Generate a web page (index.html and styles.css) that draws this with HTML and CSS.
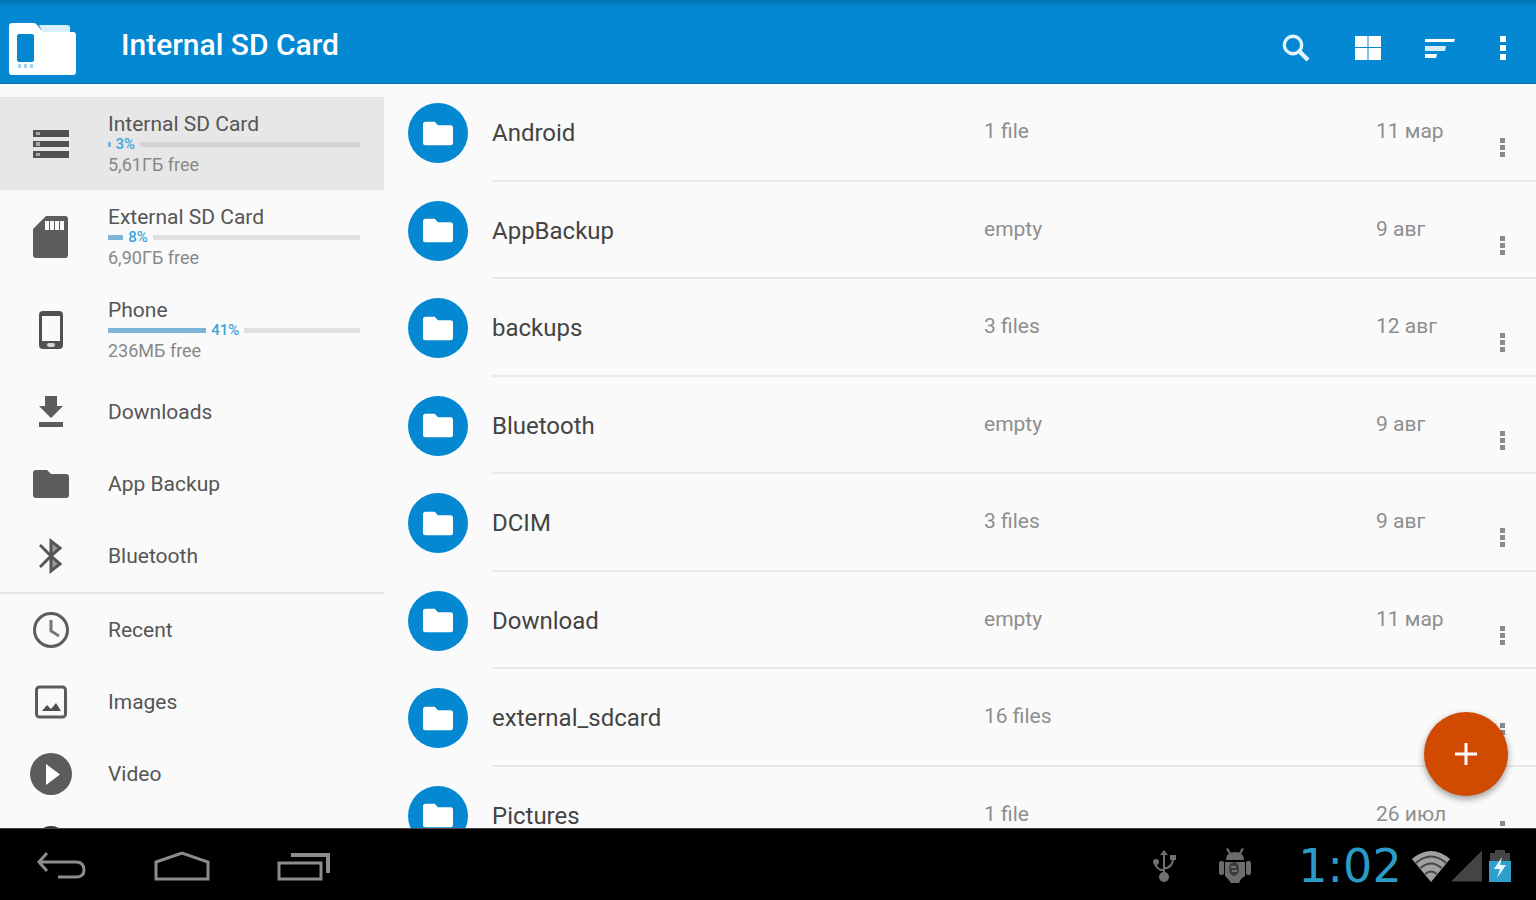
FILE: index.html
```html
<!DOCTYPE html>
<html lang="en">
<head>
<meta charset="utf-8">
<title>Internal SD Card</title>
<link rel="stylesheet" href="styles.css">
</head>
<body>
<svg class="defs" aria-hidden="true">
  <symbol id="folder" viewBox="0 0 36 30"><path d="M3 1h11l4 4h15a3 3 0 0 1 3 3v18a3 3 0 0 1-3 3H3a3 3 0 0 1-3-3V4a3 3 0 0 1 3-3z"/></symbol>
  <symbol id="dots" viewBox="0 0 6 20"><path d="M0 0h5v5H0zM0 7h5v5H0zM0 14h5v5H0z"/></symbol>
</svg>

<header class="appbar">
  <svg class="logo" viewBox="0 0 68 54" aria-hidden="true">
    <path fill="#d8effa" d="M30 3h28q3 0 3 3v5H34z"/>
    <path fill="#fff" d="M3 1h22q2 0 4 3l5 6h30q3 0 3 3v37q0 3-3 3H3q-3 0-3-3V4q0-3 3-3z"/>
    <rect x="8" y="12" width="17" height="28" rx="2" fill="#0488d2"/>
    <path fill="#a8d3ec" d="M9 42h3v4H9zM15 42h3v4h-3zM21 42h3v4h-3z"/>
  </svg>
  <h1 class="title">Internal SD Card</h1>
  <div class="actions">
    <button class="action" aria-label="Search"><svg width="30" height="30" viewBox="0 0 30 30" fill="none" stroke="#e4f4fd"><circle cx="12" cy="12" r="8.7" stroke-width="3.4"/><path d="M18.500 18.500l8.500 8.500" stroke-width="4.200"/></svg></button>
    <button class="action" aria-label="Grid view"><svg width="28" height="26" viewBox="0 0 28 26" fill="#fff"><path d="M1 1h12.500v11H1zM14.500 1h12.500v11h-12.500zM1 13h12.500v12H1zM14.500 13h12.500v12h-12.500z"/></svg></button>
    <button class="action" aria-label="Sort"><svg width="30" height="22" viewBox="0 0 30 22"><path fill="#fff" d="M0 2h30l-1 3H0zM0 17h12l-1 4H0z"/><path fill="#d5ecf9" d="M0 9h21l-1 5H0z"/></svg></button>
    <button class="action overflow" aria-label="More options"><svg width="8" height="26" viewBox="0 0 8 26" fill="#fff"><path d="M1 1h6v6H1zM1 10h6v6H1zM1 19h6v6H1z"/></svg></button>
  </div>
</header>

<div class="content">
  <nav class="sidebar" aria-label="Storage">
    <button class="place storage selected">
      <span class="place-icon"><svg width="36" height="28" viewBox="0 0 36 28"><path fill="#505050" d="M0 0h36v7H0zM0 11h36v6H0zM0 21h36v7H0z"/><path fill="#aaa" d="M3 2h4v3H3zM3 12h4v4H3zM3 23h4v3H3z"/></svg></span>
      <span class="details"><span class="label">Internal SD Card</span><span class="meter"><span class="fill" style="--value:3"></span><span class="percent">3%</span><span class="track"></span></span><span class="free">5,61ГБ free</span></span>
    </button>
    <button class="place storage">
      <span class="place-icon"><svg width="36" height="42" viewBox="0 0 36 42"><path fill="#5c5c5c" d="M13 0h19q3 0 3 3v36q0 3-3 3H3q-3 0-3-3V13z"/><path fill="#fafafa" d="M12 5h4v9h-4zM17 5h4v9h-4zM22 5h4v9h-4zM27 5h4v9h-4z"/></svg></span>
      <span class="details"><span class="label">External SD Card</span><span class="meter"><span class="fill" style="--value:8"></span><span class="percent">8%</span><span class="track"></span></span><span class="free">6,90ГБ free</span></span>
    </button>
    <button class="place storage">
      <span class="place-icon"><svg width="26" height="40" viewBox="0 0 26 40"><rect x="1" y="1" width="24" height="38" rx="4" fill="#505050"/><path fill="#fafafa" d="M4 6h18v25H4z"/><rect x="9" y="33" width="8" height="4" rx="2" fill="#d5d5d5"/></svg></span>
      <span class="details"><span class="label">Phone</span><span class="meter"><span class="fill" style="--value:41"></span><span class="percent">41%</span><span class="track"></span></span><span class="free">236МБ free</span></span>
    </button>
    <button class="place">
      <span class="place-icon"><svg width="24" height="32" viewBox="0 0 24 32" fill="#5c5c5c"><path d="M6 0h12v10h6L12 22 0 10h6zM0 26h24v5H0z"/></svg></span>
      <span class="label">Downloads</span>
    </button>
    <button class="place">
      <span class="place-icon"><svg width="36" height="30" fill="#5c5c5c"><use href="#folder"/></svg></span>
      <span class="label">App Backup</span>
    </button>
    <button class="place">
      <span class="place-icon"><svg width="24" height="36" viewBox="0 0 24 36" fill="none" stroke="#555" stroke-width="3"><path fill="#999" d="M12 18V3l9 7zM12 18v15l9-7z"/><path d="M1 7l11 11L1 29"/></svg></span>
      <span class="label">Bluetooth</span>
    </button>
    <div class="group">
      <button class="place">
        <span class="place-icon"><svg width="36" height="36" viewBox="0 0 36 36" fill="none" stroke="#5c5c5c" stroke-width="3"><circle cx="18" cy="18" r="16.500"/><path stroke="#777" d="M18 8v11l8 5"/></svg></span>
        <span class="label">Recent</span>
      </button>
      <button class="place">
        <span class="place-icon"><svg width="32" height="34" viewBox="0 0 32 34"><rect x="1.500" y="2" width="29" height="30" rx="3" fill="none" stroke="#5c5c5c" stroke-width="3"/><path fill="#505050" d="M7 26l5-6 4 4 5-6 5 8z"/></svg></span>
        <span class="label">Images</span>
      </button>
      <button class="place">
        <span class="place-icon"><svg width="42" height="42" viewBox="0 0 42 42"><circle cx="21" cy="21" r="21" fill="#5c5c5c"/><path fill="#fff" d="M16 11v21l14-10.500z"/></svg></span>
        <span class="label">Video</span>
      </button>
      <button class="place" aria-hidden="true" tabindex="-1">
        <span class="place-icon"><svg width="32" height="40" viewBox="0 0 32 40"><circle cx="16" cy="16" r="16" fill="#333"/></svg></span>
      </button>
    </div>
  </nav>

  <main class="files">
    <ul class="list">
      <li class="file"><span class="badge"><svg width="30" height="25"><use href="#folder"/></svg></span><div class="row"><span class="name">Android</span><span class="meta">1 file</span><span class="meta">11 мар</span><button class="more" aria-label="Android options"><svg width="6" height="20"><use href="#dots"/></svg></button></div></li>
      <li class="file"><span class="badge"><svg width="30" height="25"><use href="#folder"/></svg></span><div class="row"><span class="name">AppBackup</span><span class="meta">empty</span><span class="meta">9 авг</span><button class="more" aria-label="AppBackup options"><svg width="6" height="20"><use href="#dots"/></svg></button></div></li>
      <li class="file"><span class="badge"><svg width="30" height="25"><use href="#folder"/></svg></span><div class="row"><span class="name">backups</span><span class="meta">3 files</span><span class="meta">12 авг</span><button class="more" aria-label="backups options"><svg width="6" height="20"><use href="#dots"/></svg></button></div></li>
      <li class="file"><span class="badge"><svg width="30" height="25"><use href="#folder"/></svg></span><div class="row"><span class="name">Bluetooth</span><span class="meta">empty</span><span class="meta">9 авг</span><button class="more" aria-label="Bluetooth options"><svg width="6" height="20"><use href="#dots"/></svg></button></div></li>
      <li class="file"><span class="badge"><svg width="30" height="25"><use href="#folder"/></svg></span><div class="row"><span class="name">DCIM</span><span class="meta">3 files</span><span class="meta">9 авг</span><button class="more" aria-label="DCIM options"><svg width="6" height="20"><use href="#dots"/></svg></button></div></li>
      <li class="file"><span class="badge"><svg width="30" height="25"><use href="#folder"/></svg></span><div class="row"><span class="name">Download</span><span class="meta">empty</span><span class="meta">11 мар</span><button class="more" aria-label="Download options"><svg width="6" height="20"><use href="#dots"/></svg></button></div></li>
      <li class="file"><span class="badge"><svg width="30" height="25"><use href="#folder"/></svg></span><div class="row"><span class="name">external_sdcard</span><span class="meta">16 files</span><span class="meta"></span><button class="more" aria-label="external_sdcard options"><svg width="6" height="20"><use href="#dots"/></svg></button></div></li>
      <li class="file"><span class="badge"><svg width="30" height="25"><use href="#folder"/></svg></span><div class="row"><span class="name">Pictures</span><span class="meta">1 file</span><span class="meta">26 июл</span><button class="more" aria-label="Pictures options"><svg width="6" height="20"><use href="#dots"/></svg></button></div></li>
    </ul>
  </main>
  <button class="fab" aria-label="Add"><svg width="22" height="22" viewBox="0 0 22 22" fill="#fff"><path d="M9.500 0h3v9.500H22v3h-9.500V22h-3v-9.500H0v-3h9.500z"/></svg></button>
</div>

<footer class="system">
  <div class="keys">
    <button class="key" aria-label="Back"><svg width="50" height="30" viewBox="0 0 50 30" fill="none" stroke="#8c8c8c" stroke-width="3"><path d="M11 2L3 11l8 9M3 11h37q8 0 8 8 0 7-8 7H22"/></svg></button>
    <button class="key" aria-label="Home"><svg width="56" height="30" viewBox="0 0 56 30" fill="none" stroke="#8c8c8c" stroke-width="3"><path d="M2 11L28 2l26 9v17H2z"/></svg></button>
    <button class="key" aria-label="Recent apps"><svg width="54" height="30" viewBox="0 0 54 30" fill="none" stroke="#8c8c8c"><path stroke-width="3" d="M3 12h42v16H3z"/><path stroke-width="4" d="M15 4h37v18"/></svg></button>
  </div>
  <div class="status">
    <svg class="usb" width="24" height="32" viewBox="0 0 24 32" fill="none" stroke="#707070" stroke-width="2"><path d="M12 4v24M12 20H9Q3 18 3 11M12 18h3q5-2 6-8"/><g fill="#707070" stroke="none"><path d="M12 0l4 5H8z"/><circle cx="12" cy="27" r="5"/><circle cx="4" cy="12" r="3"/><path d="M18 5h6v5h-6z"/></g></svg>
    <svg class="debug" width="32" height="36" viewBox="0 0 32 36"><g fill="#6c6c6c"><path d="M7 11q1-7 9-7t9 7v1H7zM6 14h20v14l-4 3-2 4h-8l-3-4-3-3z"/><rect x="0" y="13" width="5" height="14" rx="2"/><rect x="27" y="13" width="5" height="14" rx="2"/><path d="M9 0l3 5-2 1-3-5zM23 0l-3 5 2 1 3-5z"/></g><ellipse cx="15" cy="21" rx="5" ry="7" fill="#3a3a3a"/><path d="M12 19h5M13 23h5" fill="none" stroke="#707070" stroke-width="2"/></svg>
    <time class="clock">1:02</time>
    <svg class="wifi" width="40" height="32" viewBox="0 0 42 32" preserveAspectRatio="none"><path fill="#a0a0a0" d="M1 9Q21-7 41 9L21 32z"/><g fill="none" stroke="#444" stroke-width="2"><path d="M5 13q16-13 32 0M10 18q11-9 22 0M15 24q6-5 12 0"/></g></svg>
    <svg class="signal" width="31" height="32" viewBox="0 0 32 32"><path fill="#444" d="M32 0v32H0z"/></svg>
    <svg class="battery" width="24" height="34" viewBox="0 0 24 34"><path fill="#444" d="M7 1h10v3h5v8H2V4h5z"/><path fill="#2fa0cb" d="M1 12h22v21H1z"/><path fill="#e8f8ff" d="M14 8L6 20h6l-3 9 9-13h-6z"/></svg>
  </div>
</footer>
</body>
</html>
```
FILE: styles.css
```css
* { box-sizing: border-box; }

body {
  margin: 0;
  height: 100vh;
  display: flex;
  flex-direction: column;
  overflow: hidden;
  background: #fafafa;
  color: #555;
  font-family: Roboto, "Noto Sans", sans-serif;
}

button {
  margin: 0;
  padding: 0;
  border: 0;
  background: none;
  color: inherit;
  font: inherit;
  text-align: left;
  cursor: pointer;
}

svg { display: block; }
.defs { display: none; }

.appbar {
  flex: none;
  height: 84px;
  display: flex;
  align-items: center;
  padding: 6px 0 0 9px;
  background: linear-gradient(#0072aa, #0488d2 6px);
  border-bottom: 1px solid #0674b4;
}

.logo { width: 68px; height: 54px; margin-top: 8px; }

.title {
  flex: 1;
  margin: 0 0 0 44px;
  color: #fff;
  font-size: 30px;
  font-weight: 500;
  line-height: 36px;
}

.actions { display: flex; margin-top: 6px; }

.action {
  width: 72px;
  height: 72px;
  display: grid;
  place-items: center;
}

.action.overflow {
  width: 60px;
  padding-right: 6px;
}

.content {
  position: relative;
  flex: 1;
  min-height: 0;
  display: flex;
}

.sidebar {
  width: 25%;
  padding-top: 13px;
  overflow: hidden;
}

.place {
  width: 100%;
  height: 72px;
  display: flex;
  align-items: center;
  padding-right: 24px;
  font-size: 21px;
}

.place.storage { height: 93px; }
.place.selected { background: #e7e7e7; }

.place-icon {
  flex: none;
  width: 102px;
  margin-right: 6px;
  display: grid;
  place-items: center;
}

.label { line-height: 26px; }

.details {
  flex: 1;
  display: flex;
  flex-direction: column;
  padding-top: 1px;
}

.meter {
  height: 15px;
  display: flex;
  align-items: center;
  gap: 5px;
}

.fill {
  width: calc(var(--value) * 1% - 5px);
  height: 5px;
  background: #7fb4da;
}

.percent {
  color: #3da5dc;
  font-size: 15px;
  font-weight: 500;
  line-height: 14px;
}

.track {
  flex: 1;
  height: 5px;
  background: #e0e0e0;
}

.selected .track { background: #d4d4d4; }

.free {
  color: #888;
  font-size: 18px;
  line-height: 26px;
}

.group { border-top: 2px solid #e4e4e4; }

.files {
  flex: 1;
  overflow: hidden;
}

.list {
  margin: 0;
  padding: 0;
  list-style: none;
}

.file {
  height: 98px;
  display: flex;
  align-items: center;
  gap: 24px;
  padding-left: 24px;
}

.file:nth-child(even) { height: 97px; }

.badge {
  flex: none;
  width: 60px;
  height: 60px;
  display: grid;
  place-items: center;
  border-radius: 50%;
  background: #0488d2;
  fill: #fff;
}

.row {
  flex: 1;
  align-self: stretch;
  display: grid;
  grid-template-columns: 492fr 392fr 94px 66px;
  align-items: center;
  border-bottom: 2px solid #e8e8e8;
}

.name {
  padding-top: 2px;
  color: #444;
  font-size: 24px;
  line-height: 28px;
}

.meta {
  padding-bottom: 2px;
  color: #8e8e8e;
  font-size: 21px;
  line-height: 24px;
}

.more {
  height: 48px;
  display: grid;
  place-items: center;
  margin-top: 32px;
  fill: #8a8a8a;
}

.fab {
  position: absolute;
  right: 28px;
  bottom: 32px;
  width: 84px;
  height: 84px;
  display: grid;
  place-items: center;
  border-radius: 50%;
  background: #d14a02;
  box-shadow: 0 3px 7px rgba(0, 0, 0, 0.4);
}

.system {
  flex: none;
  height: 72px;
  display: flex;
  align-items: center;
  justify-content: space-between;
  padding: 2px 24px 0 0;
  background: #000;
  border-top: 1px solid #444;
}

.keys { display: flex; }

.key {
  width: 121px;
  height: 64px;
  display: grid;
  place-items: center;
}

.status {
  display: flex;
  align-items: center;
}

.usb { margin-right: 43px; }
.debug { margin-right: 42px; }

.clock {
  margin-right: 4px;
  color: #2b9cc8;
  font-family: "DejaVu Sans", sans-serif;
  font-size: 46px;
  font-weight: 400;
  line-height: 48px;
  min-width: 114px;
  text-align: center;
}

.signal { margin-right: 6px; }
```
